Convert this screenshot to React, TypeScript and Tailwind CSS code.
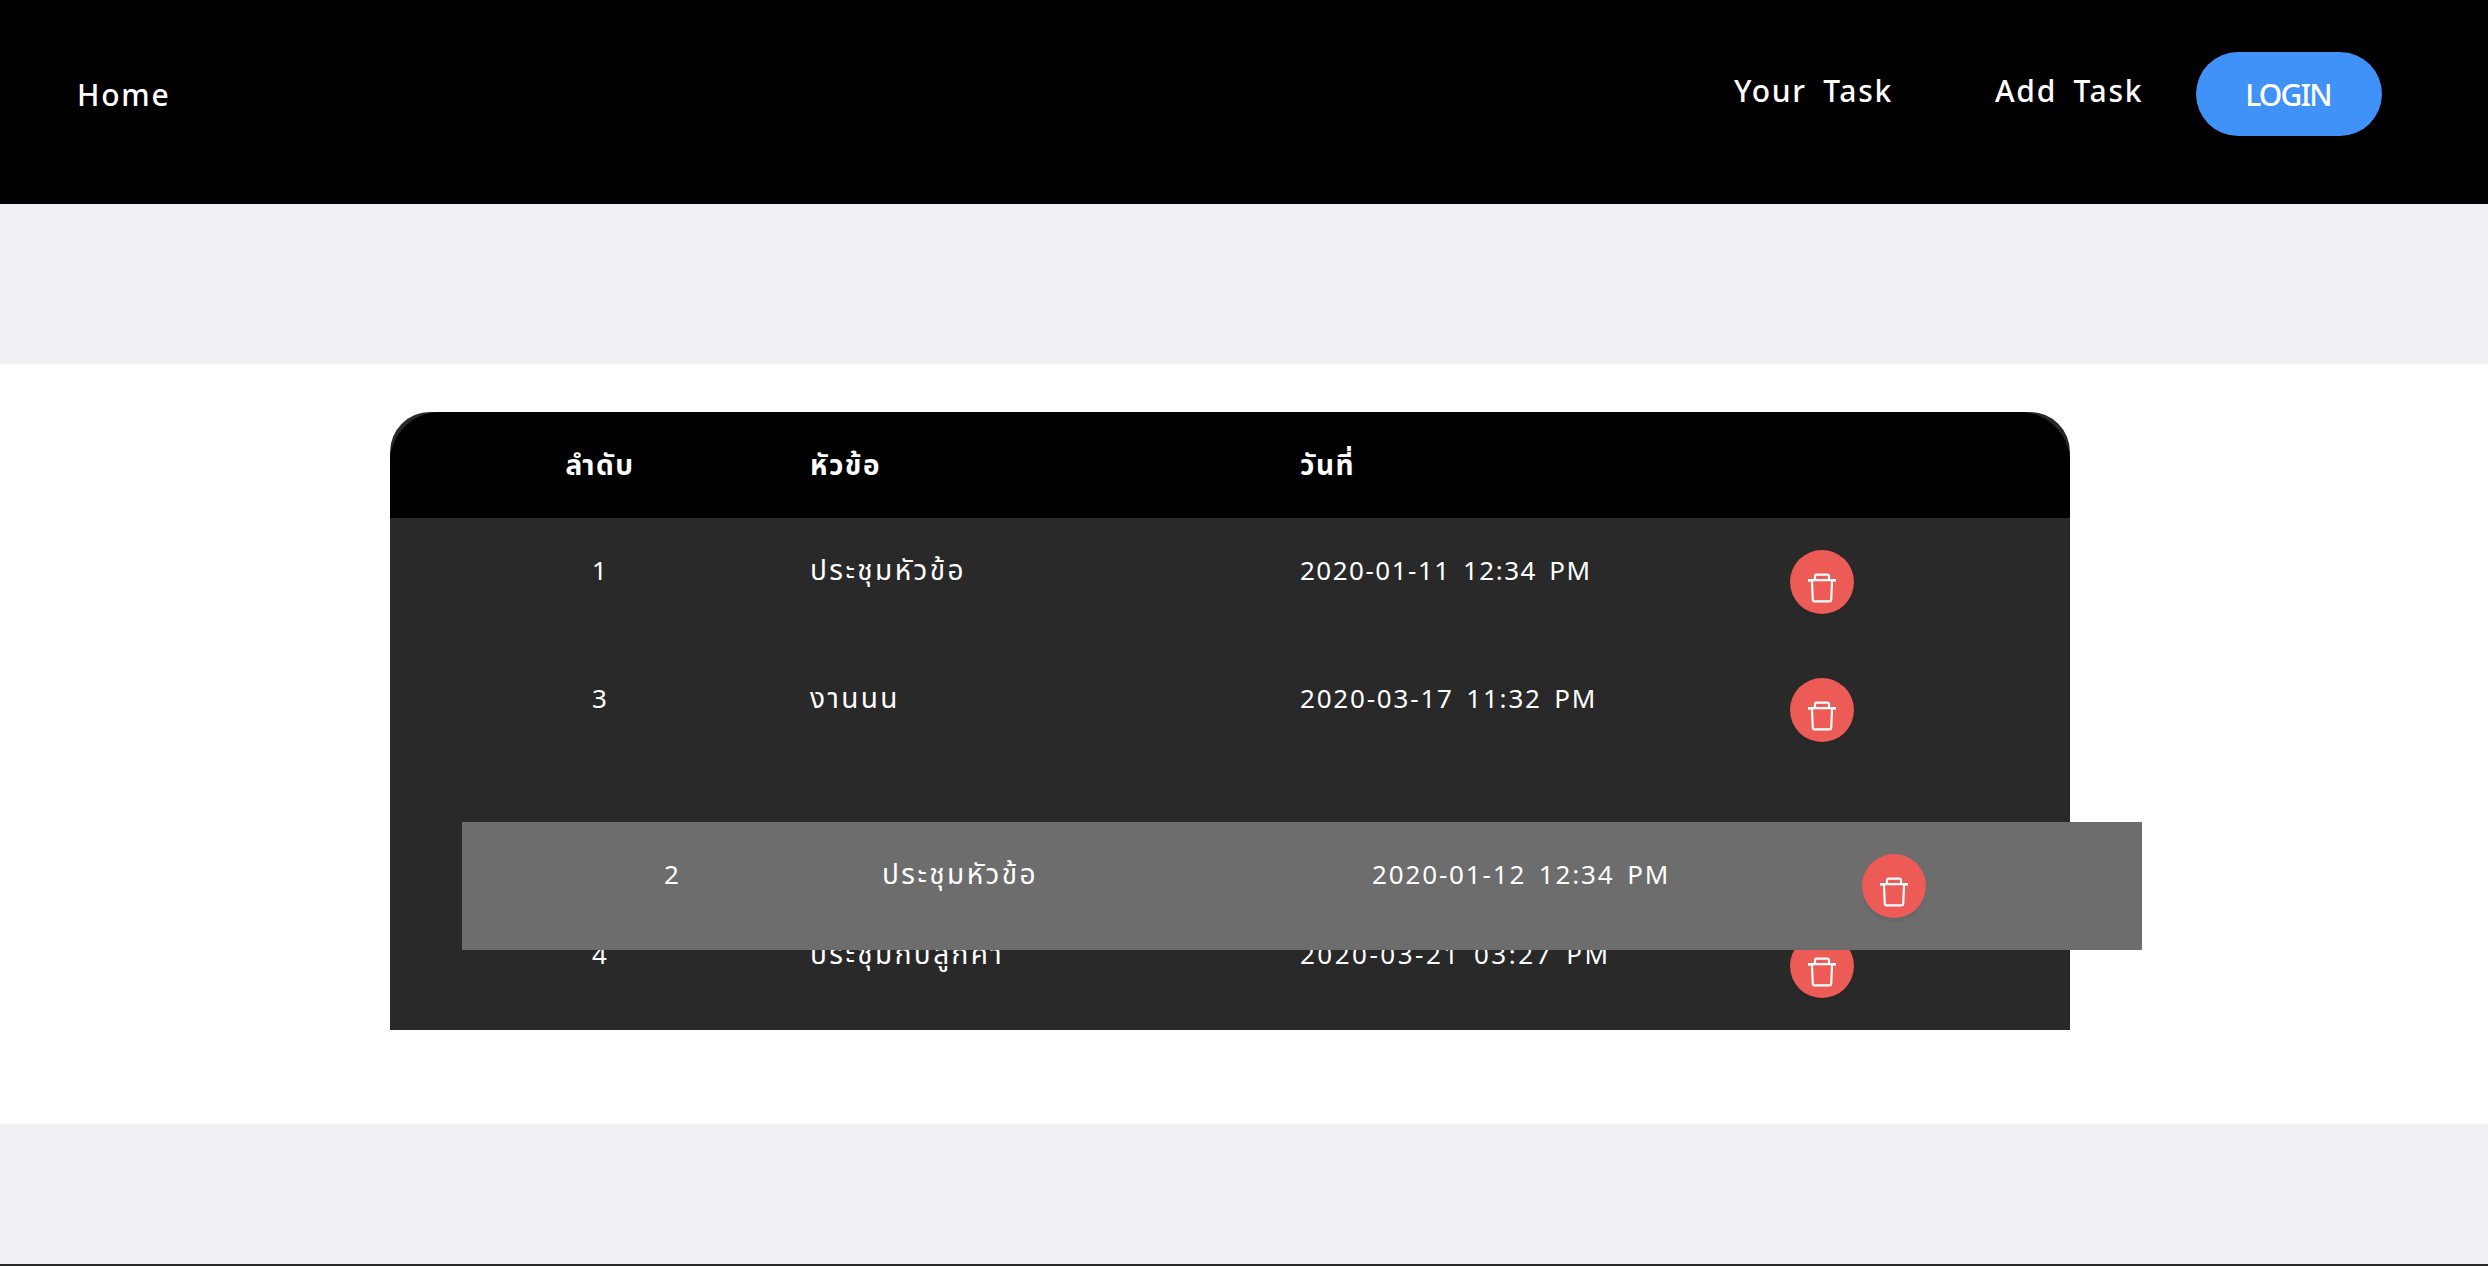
type Task = { id: string; title: string; date: string; dateClass: string };

const tasks: Task[] = [
  { id: "1", title: "ประชุมหัวข้อ", date: "2020-01-11 12:34 PM", dateClass: "tracking-[1.5px]" },
  { id: "3", title: "งานนน", date: "2020-03-17 11:32 PM", dateClass: "tracking-[1.8px]" },
  { id: "4", title: "ประชุมกับลูกค้า", date: "2020-03-21 03:27 PM", dateClass: "tracking-[2.5px]" },
];

const dragged: Task = {
  id: "2",
  title: "ประชุมหัวข้อ",
  date: "2020-01-12 12:34 PM",
  dateClass: "tracking-[1.85px]",
};

function TrashIcon() {
  return (
    <svg width="28" height="30" viewBox="0 0 28 30" fill="none" stroke="white" strokeWidth="2.2">
      <path d="M1 8.700V7.200h26V8.700M7 7V3a1.400 1.400 0 0 1 1.400-1.400h11.200A1.400 1.400 0 0 1 21 3v4" />
      <path d="M3.900 7l.9 20a1.400 1.400 0 0 0 1.400 1.300h15.600a1.400 1.400 0 0 0 1.400-1.300L24.100 7" />
    </svg>
  );
}

function Row({ task }: { task: Task }) {
  return (
    <div className="grid h-32 grid-cols-[420px_490px_490px_280px] items-start pt-8 leading-10 whitespace-nowrap text-white">
      <div className="pr-px text-center text-[26px]">{task.id}</div>
      <div className="-mt-px text-[28px] tracking-[2.4px]">{task.title}</div>
      <div className="text-[26px] [word-spacing:4px]">
        <span className={task.dateClass}>{task.date}</span>
      </div>
      <button className="flex h-16 w-16 justify-center rounded-full bg-[#ec5b56] pt-[23px] shadow-[0_4px_2px_rgba(0,0,0,0.05)]">
        <TrashIcon />
      </button>
    </div>
  );
}

export default function App() {
  return (
    <div className="flex h-[1266px] w-full flex-col overflow-hidden bg-[#f0f1f5] font-['Noto_Sans','Noto_Sans_Thai',sans-serif]">
      <header className="flex h-[204px] shrink-0 items-start justify-between bg-black pr-[106px] pl-[77px] text-[30px] leading-10 whitespace-nowrap text-white">
        <a className="mt-[75px] font-medium tracking-[1.8px]">Home</a>
        <nav className="flex items-start">
          <a className="mt-[71px] w-[261px] font-medium tracking-[1.7px] [word-spacing:7px]">Your Task</a>
          <a className="mt-[71px] w-[201px] font-medium tracking-[1.7px] [word-spacing:7px]">Add Task</a>
          <button className="mt-[52px] h-[84px] w-[186px] rounded-full bg-[#4091f8] pt-0.5 pr-0.5 font-medium tracking-[-1.8px]">LOGIN</button>
        </nav>
      </header>
      <main className="mt-40 h-[760px] shrink-0 bg-white pt-12">
        <section className="relative ml-[390px] w-[1680px] rounded-t-[40px] bg-[#292929]">
          <div className="grid h-[106px] grid-cols-[420px_490px_490px_280px] items-center rounded-t-[50px] bg-black pb-[3px] text-[28px] leading-10 font-bold tracking-[1.5px] text-white">
            <div className="text-center">ลำดับ</div>
            <div>หัวข้อ</div>
            <div>วันที่</div>
          </div>
          <Row task={tasks[0]} />
          <Row task={tasks[1]} />
          <div className="h-32" />
          <Row task={tasks[2]} />
          <div className="absolute top-[410px] left-[72px] w-[1680px] bg-[#6d6d6d]">
            <Row task={dragged} />
          </div>
        </section>
      </main>
      <footer className="mt-[140px] h-0.5 shrink-0 bg-[#292929]" />
    </div>
  );
}
